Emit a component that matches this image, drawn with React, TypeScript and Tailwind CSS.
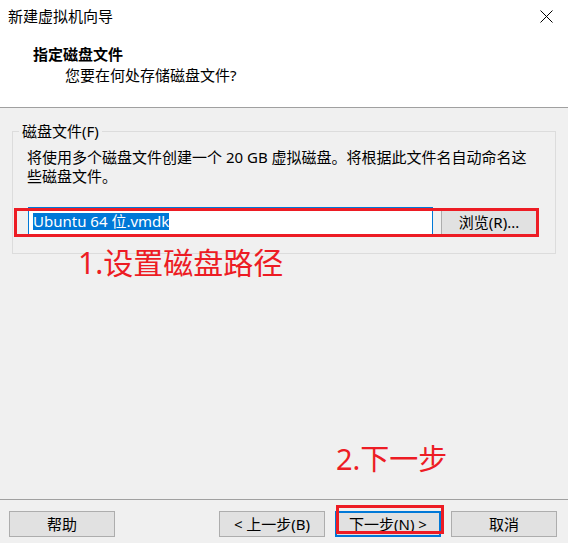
export default function App() {
  return (
    <div className="relative flex h-[543px] w-[568px] flex-col overflow-hidden bg-[#f0f0f0] font-['Noto_Sans','Noto_Sans_CJK_SC',sans-serif] text-[15px] text-black">
      <div className="h-[108px] shrink-0 border-b border-[#a0a0a0] bg-white">
        <div className="flex h-[32px] items-center justify-between pl-[8px] pr-[15px]">
          <span className="leading-[20px]">新建虚拟机向导</span>
          <svg width="13" height="13" viewBox="0 0 13 13">
            <path d="M0.5 0.5 L12.5 12.5 M12.5 0.5 L0.5 12.5" stroke="#000" strokeWidth="1" fill="none" />
          </svg>
        </div>
        <div className="mt-[12px] pl-[33px] font-bold leading-[20px]">指定磁盘文件</div>
        <div className="mt-[1px] pl-[65px] leading-[20px]">您要在何处存储磁盘文件?</div>
      </div>

      <div className="flex-1 px-[12px] pt-[13px]">
        <fieldset className="w-[544px] border border-[#dcdcdc] px-[14px] pb-[17px]">
          <legend className="ml-[-8px] px-[3px] leading-[20px]">磁盘文件(F)</legend>
          <div className="mt-[7px] whitespace-nowrap leading-[19px]">
            <div>将使用多个磁盘文件创建一个 20 GB 虚拟磁盘。将根据此文件名自动命名这</div>
            <div>些磁盘文件。</div>
          </div>
          <div className="ml-[1px] mt-[21px] flex items-start">
            <div className="flex h-[29px] w-[405px] items-center border border-[#0078d7] bg-white pl-[4px]">
              <span className="bg-[#0078d7] leading-[17px] text-white">Ubuntu 64 位.vmdk</span>
            </div>
            <button className="ml-[8px] mt-[1px] h-[28px] w-[96px] border border-[#adadad] bg-[#e1e1e1] leading-[20px]">
              浏览(R)...
            </button>
          </div>
        </fieldset>
      </div>

      <div className="flex h-[44px] shrink-0 items-start justify-between border-t border-[#a0a0a0] pl-[9px] pr-[11px] pt-[11px]">
        <button className="h-[26px] w-[106px] border border-[#adadad] bg-[#e1e1e1] leading-[20px]">帮助</button>
        <div className="flex gap-[10px]">
          <button className="h-[26px] w-[106px] border border-[#adadad] bg-[#e1e1e1] leading-[20px]">&lt; 上一步(B)</button>
          <button className="h-[26px] w-[106px] border-2 border-[#0078d7] bg-[#e1e1e1] leading-[20px]">下一步(N) &gt;</button>
          <button className="h-[26px] w-[106px] border border-[#adadad] bg-[#e1e1e1] leading-[20px]">取消</button>
        </div>
      </div>

      <div className="absolute left-[14px] top-[208px] h-[29px] w-[525px] border-[3px] border-[#ed1c24]" />
      <div className="absolute left-[78px] top-[248px] whitespace-nowrap text-[30px] leading-[30px] text-[#ed1c24]">1.设置磁盘路径</div>
      <div className="absolute left-[336px] top-[444px] whitespace-nowrap text-[29px] leading-[29px] text-[#ed1c24]">2.下一步</div>
      <div className="absolute left-[336px] top-[505px] h-[29px] w-[108px] border-[3px] border-[#ed1c24]" />
    </div>
  );
}
